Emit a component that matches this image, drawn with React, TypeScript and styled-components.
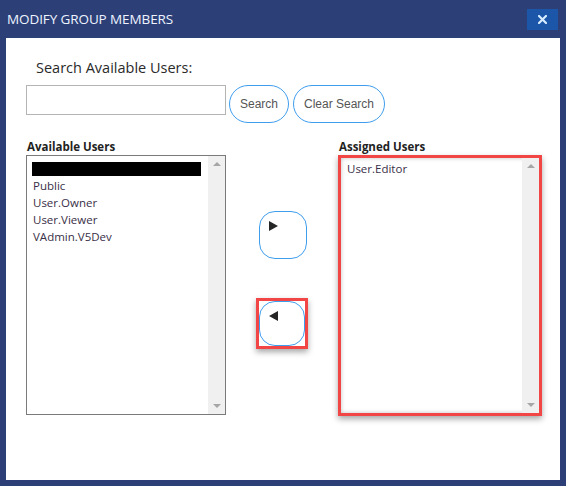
import React from "react";
import styled, { createGlobalStyle } from "styled-components";

const Global = createGlobalStyle`
  html, body { margin: 0; padding: 0; background: #ffffff; }
  * { box-sizing: border-box; }
`;

const Dialog = styled.div`
  width: 566px;
  height: 486px;
  background: #2c4077;
  padding: 0 6px 6px 6px;
  display: flex;
  flex-direction: column;
  font-family: "Open Sans", "Noto Sans", sans-serif;
`;

const Header = styled.div`
  height: 38px;
  display: flex;
  align-items: center;
  justify-content: space-between;
  padding-left: 1px;
`;

const Title = styled.div`
  color: #eef3ff;
  font-size: 13.5px;
  letter-spacing: -0.1px;
`;

const CloseButton = styled.button`
  width: 31px;
  height: 21px;
  margin-right: 2px;
  margin-top: 1px;
  border: none;
  background: #1b56a8;
  display: flex;
  align-items: center;
  justify-content: center;
  padding: 0;
`;

const Body = styled.div`
  flex: 1;
  background: #ffffff;
  padding: 20px 0 0 20px;
  display: flex;
  flex-direction: column;
`;

const SearchLabel = styled.div`
  margin-left: 10px;
  font-size: 14.5px;
  line-height: 20px;
  color: #2a2a2a;
`;

const SearchRow = styled.div`
  margin-top: 7px;
  display: flex;
  align-items: flex-start;
`;

const SearchInput = styled.input`
  width: 200px;
  height: 30px;
  border: 1px solid #b4b4b4;
  margin: 0 3px 0 0;
  outline: none;
`;

const PillButton = styled.button<{ $w: number }>`
  width: ${(p) => p.$w}px;
  height: 38px;
  margin-right: 4px;
  border: 1.5px solid #3f9ded;
  border-radius: 19px;
  background: #ffffff;
  color: #555555;
  font-family: "Liberation Sans", Arial, sans-serif;
  font-size: 12px;
  padding: 0;
`;

const Lists = styled.div`
  margin-top: 15px;
  display: flex;
  align-items: flex-start;
`;

const Column = styled.div<{ $w: number }>`
  width: ${(p) => p.$w}px;
  display: flex;
  flex-direction: column;
`;

const ListLabel = styled.div`
  font-size: 11.5px;
  font-weight: 700;
  line-height: 17px;
  height: 17px;
  color: #222222;
  padding-left: 1px;
`;

const ListBox = styled.div<{ $hl?: boolean }>`
  position: relative;
  height: ${(p) => (p.$hl ? 261 : 260)}px;
  border: ${(p) => (p.$hl ? "3px solid #f24646" : "1px solid #7a7a7a")};
  box-shadow: ${(p) =>
    p.$hl
      ? "0 3px 6px rgba(0,0,0,0.35), inset 0 0 4px rgba(0,0,0,0.25)"
      : "none"};
  display: flex;
  background: #ffffff;
`;

const Items = styled.div<{ $pl: number; $pt: number }>`
  flex: 1;
  padding: ${(p) => p.$pt}px 0 0 ${(p) => p.$pl}px;
`;

const Redacted = styled.div`
  width: 169px;
  height: 14px;
  background: #000000;
  margin: 6px 0 1px -1px;
`;

const Item = styled.div`
  font-size: 11.5px;
  line-height: 17px;
  color: #3a2f48;
`;

const Scrollbar = styled.div`
  width: 17px;
  background: #f0f0f0;
  display: flex;
  flex-direction: column;
  justify-content: space-between;
  align-items: center;
  padding: 6px 0 6px;
`;

const Arrow = styled.div<{ $down?: boolean }>`
  width: 0;
  height: 0;
  border-left: 4px solid transparent;
  border-right: 4px solid transparent;
  ${(p) =>
    p.$down
      ? "border-top: 4px solid #a6a6a6;"
      : "border-bottom: 4px solid #a6a6a6;"}
`;

const Middle = styled.div`
  width: 112px;
  display: flex;
  flex-direction: column;
  padding-left: 30px;
  padding-top: 73px;
`;

const MoveButton = styled.button<{ $h: number }>`
  width: ${(p) => (p.$h === 48 ? 48 : 46)}px;
  height: ${(p) => p.$h}px;
  border: 1px solid #3f9ded;
  border-radius: 16px;
  background: #ffffff;
  padding: 9px 0 0 9px;
  display: flex;
  align-items: flex-start;
  justify-content: flex-start;
  margin-left: ${(p) => (p.$h === 48 ? 3 : 0)}px;
`;

const HighlightBox = styled.div`
  margin-top: 39px;
  width: 52px;
  height: 51px;
  border: 3px solid #f24646;
  box-shadow: 0 3px 6px rgba(0, 0, 0, 0.35);
  display: flex;
`;

const Tri = ({ left }: { left?: boolean }) => (
  <svg width="9" height="10" viewBox="0 0 9 10">
    <polygon
      points={left ? "9,0 9,10 0,5" : "0,0 0,10 9,5"}
      fill="#262626"
    />
  </svg>
);

export default function App() {
  return (
    <>
      <Global />
      <Dialog>
        <Header>
          <Title>MODIFY GROUP MEMBERS</Title>
          <CloseButton aria-label="close">
            <svg width="9" height="9" viewBox="0 0 9 9">
              <path
                d="M1 1 L8 8 M8 1 L1 8"
                stroke="#d6ecff"
                strokeWidth="2.2"
                strokeLinecap="square"
              />
            </svg>
          </CloseButton>
        </Header>
        <Body>
          <SearchLabel>Search Available Users:</SearchLabel>
          <SearchRow>
            <SearchInput />
            <PillButton $w={60}>Search</PillButton>
            <PillButton $w={92}>Clear Search</PillButton>
          </SearchRow>
          <Lists>
            <Column $w={200}>
              <ListLabel>Available Users</ListLabel>
              <ListBox>
                <Items $pl={6} $pt={0}>
                  <Redacted />
                  <Item>Public</Item>
                  <Item>User.Owner</Item>
                  <Item>User.Viewer</Item>
                  <Item>VAdmin.V5Dev</Item>
                </Items>
                <Scrollbar>
                  <Arrow />
                  <Arrow $down />
                </Scrollbar>
              </ListBox>
            </Column>
            <Middle>
              <MoveButton $h={48}>
                <Tri />
              </MoveButton>
              <HighlightBox>
                <MoveButton $h={45}>
                  <Tri left />
                </MoveButton>
              </HighlightBox>
            </Middle>
            <Column $w={204}>
              <ListLabel>Assigned Users</ListLabel>
              <ListBox $hl>
                <Items $pl={6} $pt={2}>
                  <Item>User.Editor</Item>
                </Items>
                <Scrollbar>
                  <Arrow />
                  <Arrow $down />
                </Scrollbar>
              </ListBox>
            </Column>
          </Lists>
        </Body>
      </Dialog>
    </>
  );
}
